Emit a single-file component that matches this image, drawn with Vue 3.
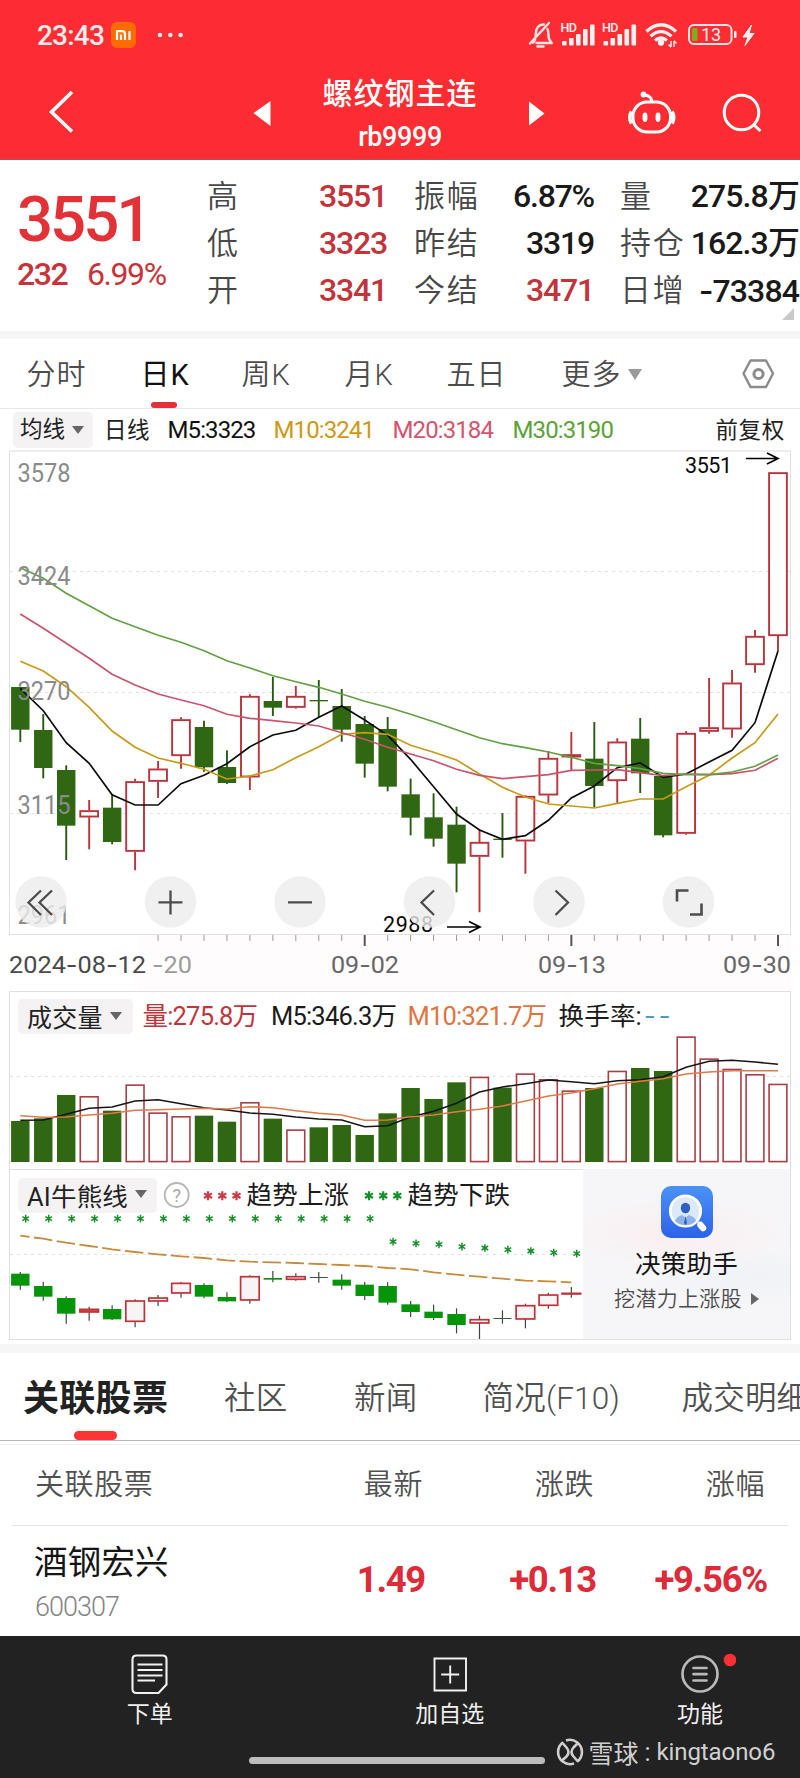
<script setup>
const STEP = 22.96
const cx = (i) => 20.3 + STEP * i

// [up, high, open/close top, open/close bottom, low], in thirds of a pixel
const daily = [
  [0, 50, 51, 179, 216], [0, 132, 180, 294, 325], [0, 286, 300, 467, 570], [1, 390, 421, 442, 538],
  [0, 373, 413, 516, 523], [1, 326, 334, 545, 601], [1, 273, 296, 335, 384], [1, 142, 148, 258, 296],
  [0, 152, 171, 292, 305], [0, 241, 291, 339, 342], [1, 73, 78, 322, 360], [0, 21, 93, 113, 138],
  [1, 48, 78, 113, 116], [0, 30, 90, 94, 142], [0, 57, 108, 179, 215], [0, 138, 162, 281, 323],
  [0, 141, 177, 350, 364], [0, 326, 373, 443, 496], [0, 370, 442, 506, 530], [0, 410, 464, 581, 667],
  [1, 478, 516, 560, 727], [0, 429, 506, 510, 563], [1, 376, 378, 514, 611], [1, 243, 264, 376, 400],
  [1, 186, 253, 262, 300], [0, 156, 266, 348, 412], [1, 205, 215, 333, 400], [0, 144, 206, 310, 369],
  [0, 315, 318, 496, 502], [1, 184, 189, 491, 494], [1, 24, 172, 185, 191], [1, 0, 38, 178, 203],
  [1, -120, -102, -15, 8], [1, -593, -593, -102, -57],
]
const trend = [
  [0, 876, 881, 917, 929], [0, 905, 918, 950, 962], [0, 949, 954, 1001, 1031], [1, 980, 986, 998, 1022],
  [0, 976, 987, 1018, 1020], [1, 958, 961, 1026, 1042], [1, 945, 952, 965, 978], [1, 906, 908, 941, 953],
  [0, 910, 915, 950, 955], [0, 937, 951, 964, 966], [1, 886, 888, 962, 971], [0, 873, 894, 899, 907],
  [1, 880, 888, 900, 902], [0, 876, 891, 893, 908], [0, 883, 899, 917, 929], [0, 906, 914, 948, 960],
  [0, 907, 918, 968, 974], [0, 963, 973, 996, 1011], [0, 974, 995, 1014, 1020], [0, 985, 1002, 1035, 1060],
  [1, 1007, 1017, 1031, 1077], [0, 991, 1014, 1016, 1031], [1, 971, 975, 1019, 1045], [1, 938, 943, 978, 986],
  [1, 921, 938, 944, 953],
]
const toCandles = (rows, base) => rows.map(([up, h, t, b, l], i) => ({
  up, x: cx(i), h: base + h / 3, t: base + t / 3, b: base + b / 3, l: base + l / 3,
}))
const candles = toCandles(daily, 670)
const trendCandles = toCandles(trend, 980)

const line = (vals, base) => vals.map((v, i) => `${cx(i).toFixed(1)},${(base + v / 3).toFixed(1)}`).join(' ')
const averages = [
  { c: '#0c0c0c', p: line([55, 122, 218, 280, 374, 405, 405, 341, 316, 281, 230, 195, 181, 142, 108, 150, 196, 268, 350, 432, 480, 508, 497, 451, 384, 348, 293, 279, 322, 312, 276, 241, 158, -57], 670) },
  { c: '#c99a16', p: line([-26, 3, 50, 112, 183, 232, 264, 280, 298, 327, 318, 299, 263, 230, 193, 188, 193, 226, 247, 270, 312, 352, 381, 402, 408, 414, 400, 387, 387, 350, 316, 264, 218, 132], 670) },
  { c: '#c9546c', p: line([-168, -125, -80, -35, 13, 45, 72, 90, 107, 133, 145, 152, 159, 168, 188, 208, 232, 252, 272, 298, 316, 326, 320, 314, 301, 300, 299, 308, 317, 312, 314, 311, 301, 265], 670) },
  { c: '#62a043', p: line([-307, -275, -230, -193, -155, -130, -104, -83, -58, -28, -6, 17, 35, 52, 72, 94, 112, 133, 155, 179, 203, 221, 233, 246, 262, 280, 287, 296, 310, 314, 314, 306, 289, 255], 670) },
]
const volumes = [423, 415, 345, 348, 392, 313, 397, 408, 407, 425, 366, 416, 448, 442, 435, 465, 400, 324, 357, 307, 290, 323, 280, 297, 331, 324, 272, 264, 273, 169, 235, 266, 282, 311]
  .map((v, i) => ({ up: daily[i][0], x: cx(i), t: 980 + v / 3 }))
const volumeLines = [
  { c: '#161616', p: line([421, 420, 403, 385, 381, 363, 359, 371, 383, 390, 399, 403, 411, 417, 420, 440, 437, 411, 394, 370, 336, 321, 311, 300, 305, 311, 302, 299, 290, 262, 244, 241, 246, 253], 980) },
  { c: '#e07a48', p: line([407, 412, 411, 405, 400, 391, 389, 387, 385, 387, 380, 383, 392, 400, 405, 421, 420, 410, 405, 395, 388, 378, 363, 348, 339, 326, 312, 304, 296, 282, 276, 272, 272, 272], 980) },
]
const trendLine = line([767, 776, 788, 798, 808, 816, 823, 829, 834, 841, 845, 847, 849, 852, 855, 858, 864, 868, 877, 884, 890, 896, 902, 904, 907], 980)
const stars = [...Array(16).fill(716), 785, 790, 793, 800, 804, 809, 813, 818, 821]
  .map((v, i) => ({ x: cx(i) + 5.4, y: 980 + v / 3 }))

const ticks = Array.from({ length: 28 }, (_, k) => k + 6)
const isMajor = (i) => i === 15 || i === 24 || i === 33
const scale = [[481.5, '3578'], [584.5, '3424'], [699.5, '3270'], [814, '3115'], [923.5, '2961']]
const dates = [
  { x: 9, w: 137, c: '#4a4a4a', t: '2024-08-12' },
  { x: 152, w: 40, c: '#9c9c9c', t: '-20' },
  { x: 331, w: 68, c: '#666', t: '09-02' },
  { x: 538, w: 68, c: '#666', t: '09-13' },
  { x: 723, w: 68, c: '#666', t: '09-30' },
]
const quotes = [
  ['高', '3551', 1, '振幅', '6.87%', 0, '量', '275.8万'],
  ['低', '3323', 1, '昨结', '3319', 0, '持仓', '162.3万'],
  ['开', '3341', 1, '今结', '3471', 1, '日增', '-73384'],
]
const splitDash = (s) => s.split(/(-)/).filter(Boolean)
const periods = ['分时', '日K', '周K', '月K', '五日', '更多']
const sections = ['关联股票', '社区', '新闻', '简况(F10)', '成交明细']
</script>

<template>
  <div class="screen">
    <header class="top">
      <div class="status">
        <span class="clock">23:43</span>
        <svg class="mi" width="25" height="26" viewBox="0 0 25 26">
          <rect width="25" height="26" rx="6" fill="#ff6b00" />
          <path d="M6 18V9.200h5.200q2.800 0 2.800 2.800v6M10 12.500v5.500M18.500 9v9" fill="none" stroke="#fff" stroke-width="2.200" />
        </svg>
        <svg class="dots" width="30" height="8" viewBox="0 0 30 8">
          <circle cx="4" cy="4" r="2.300" /><circle cx="14.300" cy="4" r="2.300" /><circle cx="24.600" cy="4" r="2.300" />
        </svg>
        <svg class="sys" width="240" height="36" viewBox="524 17 240 36">
          <g fill="none" stroke="#ffe3e3" stroke-width="2.500" stroke-linecap="round" stroke-linejoin="round">
            <path d="M533 42.500c2.500-2 2.800-4.500 2.800-8.500 0-6 3-9.500 8-9.500M547.500 29c1 2 .8 6 1.200 8.500.5 3 2.300 4 3 5.500H536.500M530 43.500L549 23M537.500 46.500h6" />
          </g>
          <g fill="#fff0f0">
            <g v-for="o in [0, 41.500]" :key="o" :transform="`translate(${o} 0)`">
              <text x="560.500" y="32" class="hd">HD</text>
              <rect x="562" y="41" width="4.600" height="4.500" rx="1" /><rect x="569" y="38" width="4.600" height="7.500" rx="1" />
              <rect x="576" y="34" width="4.600" height="11.500" rx="1" /><rect x="583" y="29" width="4.600" height="16.500" rx="1" />
              <rect x="590" y="24.500" width="4.600" height="21" rx="1" />
            </g>
            <circle cx="661" cy="42.500" r="3.200" />
            <path d="M671 41v6M668.500 44.500l2.500 2.800M674 47v-6M676.500 43.500l-2.500-2.800" stroke="#fff0f0" stroke-width="1.400" />
            <path d="M751.500 25l-8.500 12h5l-3 8.500 9-12h-5z" stroke="#fff0f0" stroke-width="1" />
            <rect x="734" y="31" width="2.500" height="7" rx="1" />
          </g>
          <g fill="none" stroke="#fff0f0" stroke-width="3.200">
            <path d="M646.500 31.500q14.500-13.500 29.500 0M650.500 36.300q10.500-9.500 21 0M655 40.500q6-5 12 0" />
          </g>
          <rect x="689" y="25" width="42.500" height="19" rx="5" fill="none" stroke="#ffe3e3" stroke-width="2" />
          <rect x="692" y="28" width="5.500" height="13" rx="1.500" fill="#7fae1c" />
          <text x="701" y="40.700" class="pct">13</text>
        </svg>
      </div>
      <div class="nav">
        <svg width="250" height="60" viewBox="0 82 250 60"><path d="M72 92L51.500 112 72 131.500" fill="none" stroke="#fff" stroke-width="3.600" /></svg>
        <svg width="24" height="60" viewBox="250 82 24 60"><path d="M253.500 113L270.500 101v25z" fill="#fff" /></svg>
        <div class="title"><b>螺纹钢主连</b><span>rb9999</span></div>
        <svg width="24" height="60" viewBox="526 82 24 60"><path d="M544.500 113.500L529 101.500v24z" fill="#fff" /></svg>
        <svg width="250" height="60" viewBox="550 82 250 60" fill="none" stroke="#fff" stroke-width="3">
          <rect x="633" y="102" width="37.500" height="30" rx="14" />
          <path d="M631.500 111.500q-3.500 6 0 12M672 111.500q3.500 6 0 12" stroke-width="3.600" />
          <path d="M651.500 102v-2q-.5-4-7-5" /><circle cx="643.500" cy="94.500" r="1.400" />
          <path d="M645 115v4.500M658 115v4.500" stroke-width="4.800" stroke-linecap="round" />
          <circle cx="741.500" cy="112.500" r="17.300" />
          <path d="M753.500 124.500l7 6.500" />
        </svg>
      </div>
    </header>

    <section class="quote">
      <div class="price"><strong>3551</strong><span>232</span><span class="pc">6.99%</span></div>
      <div class="stats">
        <template v-for="q in quotes" :key="q[0]">
          <label>{{ q[0] }}</label><em :class="{ up: q[2] }">{{ q[1] }}</em>
          <label>{{ q[3] }}</label><em :class="{ up: q[5] }">{{ q[4] }}</em>
          <label>{{ q[6] }}</label><em class="last"><i v-for="(s, k) in splitDash(q[7])" :key="k" :class="{ dash: s === '-' }">{{ s }}</i></em>
        </template>
      </div>
      <i class="corner"></i>
    </section>

    <nav class="periods">
      <span v-for="(p, i) in periods" :key="p" :class="{ on: i === 1, more: i === 5 }">{{ p }}</span>
      <svg width="34" height="34" viewBox="741 357 34 34" fill="none" stroke="#8b8b8b" stroke-width="2.400">
        <path d="M750.500 360.500h15.500l7 13-7 13.500h-15.500l-7-13.500z" stroke-linejoin="round" />
        <circle cx="758.500" cy="374" r="4.600" stroke-width="3" />
      </svg>
    </nav>

    <div class="ma">
      <span class="pill">均线</span><span class="cn">日线</span>
      <span class="num">M5:3323</span><span class="num y">M10:3241</span><span class="num p">M20:3184</span><span class="num g">M30:3190</span>
      <span class="cn">前复权</span>
    </div>

    <svg class="plot" width="800" height="540" viewBox="0 450 800 540">
      <rect x="138" y="936" width="653" height="54" fill="#fefcfc" />
      <g stroke="#e4e0e1" stroke-dasharray="3 4">
        <path d="M10 571.500H790M10 692.500H790M10 813.500H790" />
      </g>
      <rect x="9.500" y="451" width="781" height="483.500" fill="none" stroke="#e2e0e1" />
      <path d="M10 451H790" stroke="#ededed" stroke-width="2" />
      <text x="383" y="932" class="mark" textLength="50">2988</text>
      <g v-for="(c, i) in candles" :key="i">
        <template v-if="c.up">
          <path :d="`M${c.x} ${c.h}V${c.t}M${c.x} ${c.b}V${c.l}`" stroke="#b9343d" stroke-width="1.900" />
          <rect :x="c.x - 8.900" :y="c.t + 0.800" width="17.800" :height="Math.max(c.b - c.t - 1.600, 1)" fill="#fff" stroke="#b9343d" stroke-width="1.900" />
        </template>
        <template v-else>
          <path :d="`M${c.x} ${c.h}V${c.l}`" stroke="#285a10" stroke-width="1.900" />
          <rect :x="c.x - 9.200" :y="c.t" width="18.400" :height="c.b - c.t" fill="#2f6712" />
        </template>
      </g>
      <polyline v-for="a in averages" :key="a.c" :points="a.p" fill="none" :stroke="a.c" stroke-width="1.700" />
      <text v-for="s in scale" :key="s[1]" x="17.500" :y="s[0]" class="scale" textLength="53" lengthAdjust="spacingAndGlyphs">{{ s[1] }}</text>
      <text x="685" y="472.500" class="mark" textLength="47">3551</text>
      <path d="M746 458.500H777M767 453l11 5.500-11 5.500M447 927H479M469 921.500l11 5.500-11 5.500" fill="none" stroke="#000" stroke-width="1.700" />
      <circle v-for="x in [41, 170.500, 300, 429.500, 559, 688.500]" :key="x" :cx="x" cy="902" r="25.800" fill="#ececec" fill-opacity=".8" />
      <g fill="none" stroke="#4c4c4c" stroke-width="2.300">
        <path d="M41 890.500L28.500 902.500 41 915M52 890.500L39.500 902.500 52 915M158.500 902.300h24M170.500 890.500v24M288 902.300h24M434 890.500l-12.500 12 12.500 12.500M555.500 890.500l12.500 12-12.500 12.500" />
        <path d="M677 901.500v-11h11.500M701.500 903.500v11H690" stroke-width="2.600" />
      </g>
      <g v-for="i in ticks" :key="i">
        <path :d="`M${cx(i)} 935V${isMajor(i) ? 946 : 941}`" :stroke="isMajor(i) ? '#555' : '#9b9b9b'" :stroke-width="isMajor(i) ? 2 : 1" />
      </g>
      <text v-for="d in dates" :key="d.t" :x="d.x" y="973" class="date" :fill="d.c" :textLength="d.w" lengthAdjust="spacingAndGlyphs"><tspan v-for="(s, k) in splitDash(d.t)" :key="k" :class="{ dash: s === '-' }">{{ s }}</tspan></text>
    </svg>

    <section class="panel vol">
      <svg class="layer" width="800" height="178" viewBox="0 991 800 178">
        <path d="M10 1076.500H790" stroke="#e4e0e1" stroke-dasharray="3 4" />
        <path d="M9.500 1169V991.500H790.500V1169" fill="none" stroke="#e0dedf" />
        <g v-for="(v, i) in volumes" :key="i">
          <rect v-if="v.up" :x="v.x - 8.900" :y="v.t + 0.800" width="17.800" :height="1160.800 - v.t" fill="#fff" stroke="#a93f46" stroke-width="1.600" />
          <rect v-else :x="v.x - 9.200" :y="v.t" width="18.400" :height="1162 - v.t" fill="#2f6712" />
        </g>
        <polyline v-for="l in volumeLines" :key="l.c" :points="l.p" fill="none" :stroke="l.c" stroke-width="1.600" />
      </svg>
      <div class="layer head">
        <span class="pill">成交量</span><span class="r">量:275.8万</span><span>M5:346.3万</span><span class="o">M10:321.7万</span><span class="t">换手率:<i>--</i></span>
      </div>
    </section>

    <section class="panel ai">
      <svg class="layer" width="800" height="176" viewBox="0 1169 800 176">
        <defs>
          <g id="star"><path d="M0-3.800V3.800M-3.300-2L3.300 2M-3.300 2L3.300-2" fill="none" /></g>
          <g id="star-lg"><path d="M0-4.500V4.500M-4-2.300L4 2.300M-4 2.300L4-2.300" fill="none" /></g>
        </defs>
        <path d="M10 1254.500H583" stroke="#e4e0e1" stroke-dasharray="3 4" />
        <rect x="9.500" y="1169.500" width="781" height="170" fill="none" stroke="#e0dedf" />
        <g v-for="(c, i) in trendCandles" :key="i">
          <path :d="`M${c.x} ${c.h}V${c.l}`" stroke="#3a4a3a" stroke-width="1.200" />
          <rect v-if="c.up" :x="c.x - 9.300" :y="c.t + 0.700" width="18.600" :height="Math.max(c.b - c.t - 1.400, 0.600)" :fill="i === 3 ? '#e0453f' : '#f7f4f6'" stroke="#c0323a" stroke-width="1.700" />
          <rect v-else-if="c.b - c.t < 1" :x="c.x - 9" :y="c.t" width="18" height="1" fill="#3a5a3a" />
          <rect v-else :x="c.x - 9.200" :y="c.t" width="18.400" :height="c.b - c.t" fill="#06950a" />
        </g>
        <polyline :points="trendLine" fill="none" stroke="#c88a3c" stroke-width="1.800" stroke-dasharray="18.500 4.500" stroke-dashoffset="9.200" />
        <use v-for="(s, i) in stars" :key="i" href="#star" :x="s.x" :y="s.y" stroke="#18902a" stroke-width="1.500" />
        <circle cx="176.700" cy="1195" r="12" fill="none" stroke="#b5b5b5" stroke-width="1.800" />
        <text x="176.700" y="1201.500" class="help">?</text>
        <use v-for="x in [208, 222.300, 236.500]" :key="x" href="#star-lg" :x="x" y="1195.700" stroke="#cc3a44" stroke-width="2.200" />
        <use v-for="x in [369, 383.200, 397.300]" :key="x" href="#star-lg" :x="x" y="1195.700" stroke="#18902a" stroke-width="2.200" />
      </svg>
      <div class="layer head">
        <span class="pill">AI牛熊线</span><span>趋势上涨</span><span>趋势下跌</span>
      </div>
      <aside class="layer promo">
        <svg width="52" height="52" viewBox="0 0 52 52">
          <defs><linearGradient id="blue" x1="0" y1="0" x2="0" y2="1"><stop offset="0" stop-color="#4b92f7" /><stop offset="1" stop-color="#2c62e8" /></linearGradient></defs>
          <rect width="52" height="52" rx="10" fill="url(#blue)" />
          <path d="M37 36l5 5" stroke="#cfe0ff" stroke-width="3" /><path d="M39.500 39l2.500 3" stroke="#fff" stroke-width="6.500" stroke-linecap="round" />
          <circle cx="24.500" cy="25" r="15.200" fill="#dce9fb" stroke="#fff" stroke-width="2.800" />
          <path d="M14 35q1-4 7-6l3.500 2.500 3.500-2.500q6 2 7 6-4.500 4.300-10.500 4.300T14 35z" fill="#8fb2ea" />
          <ellipse cx="24.500" cy="22" rx="4.700" ry="5.300" fill="#2d5fc4" /><path d="M24.500 30l-1.500 7 1.500 2 1.500-2z" fill="#2d5fc4" />
        </svg>
        <b>决策助手</b><small>挖潜力上涨股</small>
      </aside>
    </section>

    <nav class="sections"><span v-for="(s, i) in sections" :key="s" :class="{ on: i === 0 }">{{ s }}</span></nav>

    <section class="table">
      <div class="row th"><span>关联股票</span><span>最新</span><span>涨跌</span><span>涨幅</span></div>
      <div class="row td">
        <div><p>酒钢宏兴</p><small>600307</small></div><b>1.49</b><b>+0.13</b><b>+9.56%</b>
      </div>
    </section>

    <footer class="bar">
      <div class="act">
        <svg width="48" height="44" viewBox="126 1652 48 44" fill="none" stroke="#f2f2f2" stroke-width="2.100">
          <path d="M136.500 1655.500h26q4 0 4 4v25l-8 8.500h-22q-4 0-4-4v-29.500q0-4 4-4z" /><path d="M137.500 1664.500h25M137.500 1670h25M137.500 1675.500h25M137.500 1680.500h17.500" stroke-width="1.800" />
        </svg><span>下单</span>
      </div>
      <div class="act">
        <svg width="48" height="44" viewBox="425.500 1652 48 44" fill="none" stroke="#f2f2f2" stroke-width="1.900"><path d="M434 1658.500h31.500v32H434zM449.700 1665.500v18M440.700 1674.500h18" /></svg>
        <span>加自选</span>
      </div>
      <div class="act">
        <svg width="72" height="44" viewBox="664 1652 72 44" fill="none" stroke="#b9b9b9" stroke-width="2.700">
          <circle cx="700" cy="1674" r="17.500" /><path d="M693.500 1668h13M693.500 1674.200h13M693.500 1680.500h13" stroke-linecap="round" /><circle cx="730" cy="1660" r="6.300" fill="#fb3037" stroke="none" />
        </svg>
        <span>功能</span>
      </div>
      <i class="home"></i>
      <div class="sign">
        <svg width="28" height="28" viewBox="0 0 28 28" fill="none" stroke="#cfcfcf" stroke-width="2.600">
          <path d="M7 4.200A12.200 12.200 0 0 0 7 23.800M21 4.200A12.200 12.200 0 0 1 21 23.800M10 2.500A12.200 12.200 0 0 1 21 4.200M7 23.800A12.200 12.200 0 0 0 18 25.500" />
          <path d="M6.500 5l4 4.500q4 4.500 0 9L5.500 23M21.500 5.500l-4 4q-4 4.500 0 9l4 4.500" />
        </svg>
        <span>雪球</span><em>:</em><span>kingtaono6</span>
      </div>
    </footer>
  </div>
</template>

<style>
body { background: #fff; }
</style>

<style scoped>
.screen { width: 800px; height: 1778px; overflow: hidden; background: #fff; font-family: Roboto, "Noto Sans CJK SC", sans-serif; color: #1c1c1c; }
.screen svg { display: block; flex: none; }
i, em { font-style: normal; }
span, label, em { white-space: nowrap; }
.top { height: 160px; background: #fb2d33; color: #fff; box-sizing: border-box; border-bottom: 1px solid #c8484c; }
.status { height: 70px; display: flex; align-items: center; box-sizing: border-box; padding-left: 37px; }
.clock { width: 74px; font-size: 28px; font-weight: 500; letter-spacing: -.8px; color: #ffecec; }
.dots { margin-left: 19.500px; fill: #ffecec; }
.sys { margin-left: 338.500px; }
.hd { font: 500 12.500px Roboto; letter-spacing: -.5px; }
.pct { font: 18px Roboto; fill: #ffe9e9; }
.nav { display: flex; height: 89px; padding-top: 12px; box-sizing: border-box; }
.title { width: 252px; margin-top: -10px; display: flex; flex-direction: column; align-items: center; }
.title b { font-size: 30px; font-weight: 500; line-height: 43px; letter-spacing: 1px; }
.title span { font-size: 27px; font-weight: 500; line-height: 45px; letter-spacing: -.4px; }

.quote { position: relative; height: 179px; box-sizing: border-box; border-bottom: 8px solid #f6f6f6; display: flex; color: #e03338; }
.price { width: 207px; padding: 28px 0 0 17px; box-sizing: border-box; color: #c93238; font-size: 32px; letter-spacing: -1.400px; line-height: 40px; font-weight: 500; }
.price strong { display: block; font-size: 63.500px; line-height: 64px; height: 66px; letter-spacing: -3px; font-weight: 500; color: #e23237; }
.price .pc { margin-left: 19.500px; font-weight: 400; }
.stats { display: grid; width: 593px; padding-top: 13px; grid-template-columns: 80px 100px 104px 103px 109px 96px; grid-template-rows: repeat(3, 47px); line-height: 47px; }
.stats label { font-size: 31px; letter-spacing: 1.700px; color: #484848; font-weight: 350; }
.stats label:nth-of-type(3n+2) { margin-left: 27px; }
.stats label:nth-of-type(3n) { margin-left: 26px; }
.stats em { font-size: 32px; letter-spacing: -1.200px; text-align: right; color: #1a1a1a; font-weight: 500; justify-self: end; }
.stats em.last { letter-spacing: -.9px; }
.stats em.up { color: #c2333a; }
.corner { position: absolute; right: 6px; bottom: 11px; border-left: 12px solid transparent; border-bottom: 12px solid #c9c9c9; }

.periods { height: 70px; box-sizing: border-box; border-bottom: 1px solid #e8e8e8; padding-left: 26.500px; display: grid; grid-template-columns: 114px 101px 103px 102px 115px 179px 34px; align-items: center; font-size: 29px; letter-spacing: 1px; color: #4c4c4c; font-weight: 350; }
.periods span { position: relative; line-height: 66px; padding-top: 3px; }
.periods .on { color: #111; font-weight: 400; }
.periods .on::after { content: ""; position: absolute; left: 10.500px; bottom: 0; width: 26px; height: 6.500px; border-radius: 4px; background: #e03237; }
.more::after { content: ""; display: inline-block; margin-left: 6px; vertical-align: 5px; border: 7px solid transparent; border-top: 11px solid #9a9a9a; border-bottom: 0; }

.ma { height: 41px; padding-left: 13px; display: grid; grid-template-columns: 91px 63.500px 106px 119px 120px 203px 80px; align-items: center; font-size: 22.500px; color: #222; }
.pill { background: #f5f2f4; border-radius: 5px; justify-self: start; color: #222; display: flex; align-items: center; box-sizing: border-box; }
.pill::after { content: ""; margin-left: 7px; border: 6.500px solid transparent; border-top: 8px solid #666; border-bottom: 0; }
.ma .pill { width: 80px; height: 36px; padding-left: 7px; line-height: 33px; }
.cn { letter-spacing: .6px; margin-top: -3px; }
.num { font-size: 24px; letter-spacing: -.9px; color: #111; }
.num.y { color: #cc9a16; }
.num.p { color: #d5536d; }
.num.g { color: #5aa336; }

.scale { font: 25px Roboto; fill: #8b8b8b; }
.mark { font: 21.500px Roboto; fill: #0a0a0a; }
.date { font-family: Roboto; font-size: 24px; }
.dash { font-family: Inter; }
.help { font: 18px Roboto; fill: #a8a8a8; text-anchor: middle; }

.panel { display: grid; position: relative; margin-top: 1px; }
.layer { grid-area: 1 / 1; }
.vol { height: 178px; }
.head { align-self: start; display: grid; align-items: center; font-size: 25.500px; color: #1b1b1b; padding-left: 18px; z-index: 1; }
.head > span:not(.pill) { margin-top: -6px; }
.vol .head { grid-template-columns: 124.500px 128.500px 136.500px 151px 200px; padding-top: 8px; letter-spacing: -.8px; }
.vol .head .t { letter-spacing: .2px; }
.vol .pill { width: 115px; height: 35px; padding-left: 9px; letter-spacing: .3px; font-size: 25px; padding-bottom: 1px; }
.head .r { color: #c2343a; }
.head .o { color: #e0743f; }
.head i { color: #4c9cc0; font-family: Inter; letter-spacing: 3px; margin-left: 2px; }
.ai { height: 175px; margin-top: 0; border-bottom: 9px solid #f6f6f6; }
.ai .head { grid-template-columns: 228.500px 161px 200px; padding-top: 9px; letter-spacing: .2px; }
.ai .pill { width: 139px; height: 35px; padding-left: 9px; padding-bottom: 3px; font-size: 25.500px; }
.promo { justify-self: end; width: 207px; height: 170px; margin-right: 10px; z-index: 1; display: flex; flex-direction: column; align-items: center; padding-top: 17px; box-sizing: border-box; background: radial-gradient(ellipse 120px 38px at 45% 38%, #fbeef0, transparent), radial-gradient(ellipse 120px 30px at 85% 64%, #f0f2f6, transparent), #f6f6f8; }
.promo b { font-size: 25.500px; font-weight: 400; line-height: 36px; margin-top: 8px; color: #151515; letter-spacing: .2px; }
.promo small { font-size: 21px; line-height: 34px; color: #4c4c4c; font-weight: 350; letter-spacing: .3px; display: flex; align-items: center; }
.promo small::after { content: ""; margin-left: 9px; border: 6px solid transparent; border-left: 8px solid #666; border-right: 0; }

.sections { height: 88px; box-sizing: border-box; border-bottom: 1px solid #b5b5b5; padding-left: 23px; display: grid; grid-template-columns: 201px 130px 128.500px 199px 142px; line-height: 82px; font-size: 31.500px; letter-spacing: .2px; color: #505050; font-weight: 350; }
.sections span { padding-top: 5px; }
.sections .on { position: relative; font-size: 36px; font-weight: 700; color: #222; letter-spacing: .3px; }
.sections .on::after { content: ""; position: absolute; left: 51px; bottom: 0; width: 43px; height: 9px; border-radius: 5px; background: #fd3334; }
.table { margin-top: 3px; border-top: 1px solid #f1f1f1; }
.row { margin: 0 12px; display: grid; grid-template-columns: 217px 171px 171px 171px; padding-left: 23px; align-items: center; }
.row > :not(:first-child) { text-align: right; }
.th { height: 80px; border-bottom: 1px solid #e3e3e3; font-size: 29px; letter-spacing: .6px; color: #505050; font-weight: 350; }
.th span { margin-top: -6px; }
.td { height: 110px; }
.td p { margin: 2px 0 0 -1px; font-size: 33.500px; line-height: 50px; color: #151515; white-space: nowrap; letter-spacing: .2px; }
.td small { display: block; font-size: 27px; line-height: 38px; letter-spacing: -1px; color: #858585; font-weight: 300; }
.td b { font-size: 36.500px; font-weight: 700; letter-spacing: -1.300px; color: #dd2b3a; margin: -3px -2px 0 0; }

.bar { position: relative; height: 142px; background: #222; color: #f0f0f0; display: grid; grid-template-columns: 299.500px 300.500px 200px; box-sizing: border-box; padding-top: 16px; }
.act { display: flex; flex-direction: column; align-items: center; font-size: 23px; line-height: 36px; }
.act span { margin-top: 1px; }
.home { position: absolute; left: 249px; top: 121px; width: 296px; height: 7px; border-radius: 4px; background: #bdbdbd; }
.sign { position: absolute; left: 555.500px; top: 101px; height: 30px; display: flex; align-items: center; font-size: 25px; color: #d0d0d0; }
.sign span { margin-left: 5px; }
.sign em { width: 12px; padding-left: 6px; }
.sign em + span { margin-left: 0; font-size: 24px; letter-spacing: -.1px; }
</style>
